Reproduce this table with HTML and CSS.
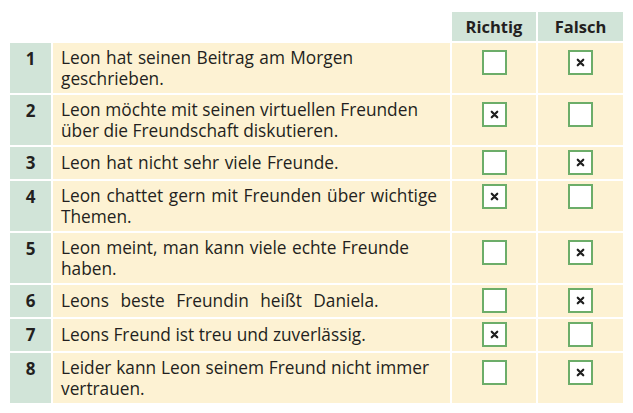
FILE: index.html
```html
<!DOCTYPE html>
<html lang="de">
<head>
<meta charset="utf-8">
<link rel="stylesheet" href="styles.css">
</head>
<body>
<div class="quiz">
  <div class="row head">
    <div class="blank"></div>
    <div class="blank"></div>
    <div class="hcell">Richtig</div>
    <div class="hcell">Falsch</div>
  </div>

  <div class="row two">
    <div class="num">1</div>
    <div class="txt"><p class="w1">Leon hat seinen Beitrag am Morgen geschrieben.</p></div>
    <div class="box"><span class="cb"></span></div>
    <div class="box"><span class="cb"><svg viewBox="0 0 10 10"><path d="M2.5 2.5 7.5 7.5M7.5 2.5 2.5 7.5"/></svg></span></div>
  </div>

  <div class="row two">
    <div class="num">2</div>
    <div class="txt"><p class="w2">Leon möchte mit seinen virtuellen Freunden über die Freundschaft diskutieren.</p></div>
    <div class="box"><span class="cb"><svg viewBox="0 0 10 10"><path d="M2.5 2.5 7.5 7.5M7.5 2.5 2.5 7.5"/></svg></span></div>
    <div class="box"><span class="cb"></span></div>
  </div>

  <div class="row one">
    <div class="num">3</div>
    <div class="txt"><p class="ws3">Leon hat nicht sehr viele Freunde.</p></div>
    <div class="box"><span class="cb"></span></div>
    <div class="box"><span class="cb"><svg viewBox="0 0 10 10"><path d="M2.5 2.5 7.5 7.5M7.5 2.5 2.5 7.5"/></svg></span></div>
  </div>

  <div class="row two r4">
    <div class="num">4</div>
    <div class="txt"><p class="w4">Leon chattet gern mit Freunden über wichtige Themen.</p></div>
    <div class="box"><span class="cb"><svg viewBox="0 0 10 10"><path d="M2.5 2.5 7.5 7.5M7.5 2.5 2.5 7.5"/></svg></span></div>
    <div class="box"><span class="cb"></span></div>
  </div>

  <div class="row two">
    <div class="num">5</div>
    <div class="txt"><p class="w5">Leon meint, man kann viele echte Freunde haben.</p></div>
    <div class="box"><span class="cb"></span></div>
    <div class="box"><span class="cb"><svg viewBox="0 0 10 10"><path d="M2.5 2.5 7.5 7.5M7.5 2.5 2.5 7.5"/></svg></span></div>
  </div>

  <div class="row one">
    <div class="num">6</div>
    <div class="txt"><p class="ws6">Leons beste Freundin heißt Daniela.</p></div>
    <div class="box"><span class="cb"></span></div>
    <div class="box"><span class="cb"><svg viewBox="0 0 10 10"><path d="M2.5 2.5 7.5 7.5M7.5 2.5 2.5 7.5"/></svg></span></div>
  </div>

  <div class="row one">
    <div class="num">7</div>
    <div class="txt"><p>Leons Freund ist treu und zuverlässig.</p></div>
    <div class="box"><span class="cb"><svg viewBox="0 0 10 10"><path d="M2.5 2.5 7.5 7.5M7.5 2.5 2.5 7.5"/></svg></span></div>
    <div class="box"><span class="cb"></span></div>
  </div>

  <div class="row two">
    <div class="num">8</div>
    <div class="txt"><p class="w8">Leider kann Leon seinem Freund nicht immer vertrauen.</p></div>
    <div class="box"><span class="cb"></span></div>
    <div class="box"><span class="cb"><svg viewBox="0 0 10 10"><path d="M2.5 2.5 7.5 7.5M7.5 2.5 2.5 7.5"/></svg></span></div>
  </div>
</div>
</body>
</html>
```
FILE: styles.css
```css
html, body {
  margin: 0;
  padding: 0;
  background: #ffffff;
}

body {
  font-family: "Open Sans", "Noto Sans", sans-serif;
  color: #231f20;
}

.quiz {
  display: flex;
  flex-direction: column;
  gap: 2px;
  padding: 12px 0 0 10px;
  width: 613px;
}

.row {
  display: grid;
  grid-template-columns: 41px 397px 84px 85px;
  column-gap: 2px;
}

.row.two { height: 50px; }
.row.one { height: 32px; }
.row.head { height: 29px; }

.blank { background: transparent; }

.hcell {
  background: #d1e4d8;
  font-weight: 700;
  font-size: 16.5px;
  line-height: 29px;
  text-align: center;
  color: #231f20;
}

.num {
  background: #d1e4d8;
  font-weight: 700;
  font-size: 17px;
  line-height: 21px;
  text-align: center;
  padding-top: 5px;
}

.txt {
  background: #fdf2d3;
  padding: 4px 0 0 8px;
  font-size: 17.3px;
  line-height: 21px;
}

.row.one .txt { padding-top: 5px; }

.txt p {
  margin: 0;
  text-align: justify;
}

.w1 { width: 292px; }
.w2 { width: 357px; }
.w4 { width: 376px; }
.w5 { width: 348px; }
.w8 { width: 368px; }

.ws3 { word-spacing: 1px; }
.ws6 { word-spacing: 7px; }

.box {
  background: #fdf2d3;
  display: flex;
  justify-content: center;
  align-items: flex-start;
  padding-top: 7px;
}

.row.one .box { padding-top: 3px; }
.row.r4 .box { padding-top: 3px; }

.cb {
  display: flex;
  align-items: center;
  justify-content: center;
  box-sizing: border-box;
  width: 25px;
  height: 25px;
  background: #ffffff;
  border: 2px solid #6cad69;
}

.cb svg {
  width: 11px;
  height: 11px;
}

.cb svg path {
  stroke: #1e1e1e;
  stroke-width: 2;
  stroke-linecap: round;
  fill: none;
}
```
